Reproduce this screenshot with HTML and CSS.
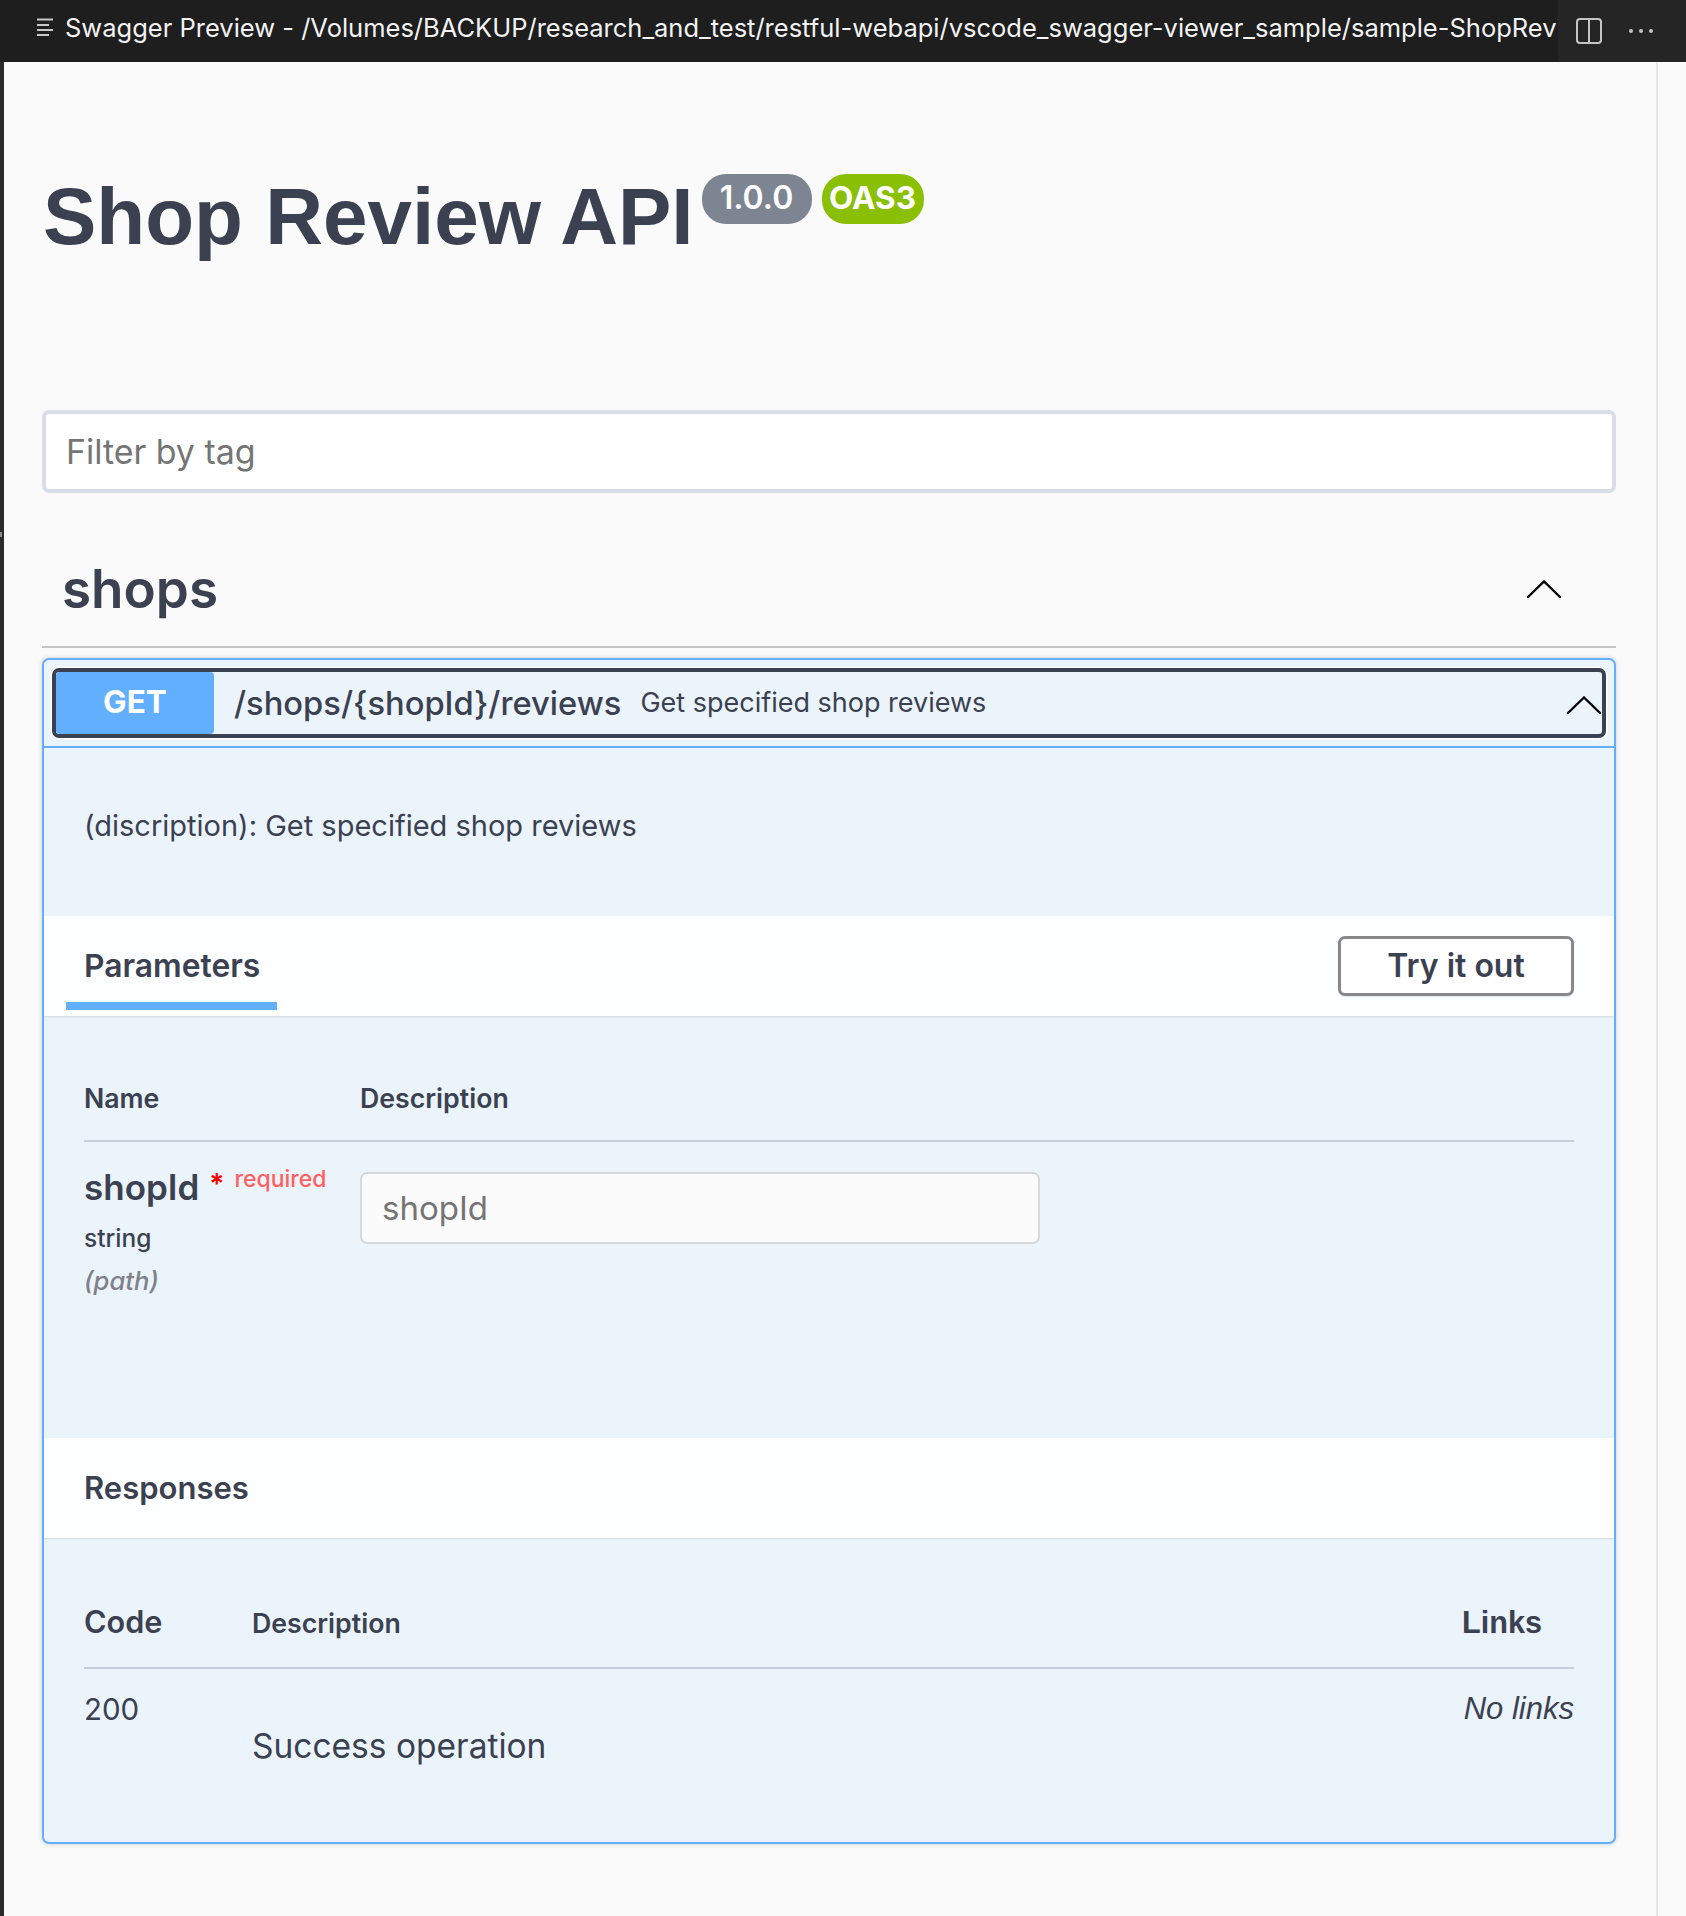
FILE: index.html
```html
<!DOCTYPE html>
<html lang="en">
<head>
<meta charset="utf-8">
<title>Swagger Preview</title>
<link rel="stylesheet" href="styles.css">
</head>
<body>
<header class="titlebar">
  <div class="tab">
    <svg class="tab-icon" width="16" height="18" viewBox="0 0 16 18"><path d="M0 1.500h16M0 7h12M0 12h16M0 17h12" stroke="#c8c8c8" stroke-width="2" fill="none"/></svg>
    <span class="tab-label">Swagger Preview - /Volumes/BACKUP/research_and_test/restful-webapi/vscode_swagger-viewer_sample/sample-ShopReview.yaml</span>
  </div>
  <div class="actions">
    <svg width="26" height="26" viewBox="0 0 26 26"><rect x="1" y="1" width="24" height="24" rx="3" fill="none" stroke="#c5c5c5" stroke-width="2"/><path d="M13 1v24" stroke="#c5c5c5" stroke-width="2"/></svg>
    <svg width="24" height="4" viewBox="0 0 24 4"><circle cx="2" cy="2" r="2" fill="#c5c5c5"/><circle cx="12" cy="2" r="2" fill="#c5c5c5"/><circle cx="22" cy="2" r="2" fill="#c5c5c5"/></svg>
  </div>
</header>
<div class="workbench">
  <div class="edge"></div>
  <main class="swagger">
    <div class="info">
      <h1 class="title">Shop Review API</h1>
      <span class="badge badge-version">1.0.0</span>
      <span class="badge badge-oas">OAS3</span>
    </div>
    <div class="filter"><span class="filter-placeholder">Filter by tag</span></div>
    <div class="tag">
      <h2 class="tag-name">shops</h2>
      <svg class="chevron" width="34" height="18" viewBox="0 0 34 18"><path d="M1 17 17 1.500 33 17" fill="none" stroke="#000" stroke-width="2.400" stroke-linecap="round"/></svg>
    </div>
    <section class="opblock">
      <div class="summary">
        <div class="summary-focus">
          <span class="method">GET</span>
          <span class="path">/shops/{shopId}/reviews</span>
          <span class="summary-text">Get specified shop reviews</span>
          <svg class="chevron-inner" width="34" height="18" viewBox="0 0 34 18"><path d="M1 17 17 1.500 33 17" fill="none" stroke="#000" stroke-width="2.400" stroke-linecap="round"/></svg>
        </div>
      </div>
      <div class="description"><p>(discription): Get specified shop reviews</p></div>
      <div class="section-head">
        <div class="tab-title"><span>Parameters</span></div>
        <button class="try-out">Try it out</button>
      </div>
      <div class="params">
        <div class="param-cols param-head">
          <span>Name</span>
          <span>Description</span>
        </div>
        <div class="param-cols param-row">
          <div>
            <div class="param-name">shopId<span class="star">*</span><span class="required">required</span></div>
            <div class="param-type">string</div>
            <div class="param-in">(path)</div>
          </div>
          <div class="param-input"><span>shopId</span></div>
        </div>
      </div>
      <div class="section-head section-head-plain"><span class="section-title">Responses</span></div>
      <div class="responses">
        <div class="resp-cols resp-head">
          <span class="resp-code-h">Code</span>
          <span class="resp-desc-h">Description</span>
          <span class="resp-links-h">Links</span>
        </div>
        <div class="resp-cols resp-row">
          <span class="resp-code">200</span>
          <span class="resp-desc">Success operation</span>
          <span class="resp-links">No links</span>
        </div>
      </div>
    </section>
  </main>
  <div class="scroll-gutter"></div>
</div>
</body>
</html>
```
FILE: styles.css
```css
* { box-sizing: border-box; }
html, body { margin: 0; padding: 0; }
body {
  width: 1686px;
  height: 1916px;
  overflow: hidden;
  background: #fafafa;
  color: #3b4151;
  font-family: Inter, "Liberation Sans", sans-serif;
}
.titlebar {
  height: 62px;
  display: flex;
  background: #1e1e1e;
}
.tab {
  flex: 1;
  min-width: 0;
  display: flex;
  align-items: center;
  padding: 0 0 8px 37px;
  overflow: hidden;
}
.tab-icon { flex: none; margin-right: 12px; }
.tab-label {
  color: #f2f2f2;
  font-size: 25.500px;
  white-space: nowrap;
}
.actions {
  flex: none;
  width: 128px;
  display: flex;
  align-items: center;
  gap: 27px;
  padding-left: 18px;
  background: #252526;
}
.workbench {
  display: flex;
  height: 1854px;
}
.edge {
  flex: none;
  width: 4px;
  background: #2b2b2b;
}
.edge::after {
  content: "";
  display: block;
  width: 2px;
  height: 5px;
  margin-top: 470px;
  background: #8a8a8a;
}
.swagger {
  flex: 1;
  min-width: 0;
  padding: 0 40px 0 38px;
}
.scroll-gutter {
  flex: none;
  width: 30px;
  border-left: 2px solid #e6e6e6;
}
.info {
  display: flex;
  align-items: flex-start;
  height: 348px;
  padding-top: 107px;
}
.title {
  margin: 0 8px 0 1px;
  font-family: "Liberation Sans", sans-serif;
  font-size: 80px;
  line-height: 96px;
  font-weight: 700;
  color: #3b4151;
}
.badge {
  height: 50px;
  margin-top: 5px;
  border-radius: 24px;
  color: #fff;
  font-size: 32px;
  font-weight: 600;
  line-height: 47px;
  text-align: center;
}
.badge-version { width: 110px; margin-right: 10px; background: #7d8492; }
.badge-oas { width: 102px; background: #89bf04; font-size: 31.500px; font-weight: 700; }
.filter {
  height: 83px;
  border: 4px solid #d8dde7;
  border-radius: 7px;
  background: #fff;
  padding-left: 20px;
  display: flex;
  align-items: center;
}
.filter-placeholder { font-size: 33.900px; color: #757575; }
.tag {
  height: 155px;
  display: flex;
  align-items: center;
  justify-content: space-between;
  padding: 39px 55px 0 20px;
  border-bottom: 2px solid #c3c3c6;
}
.tag-name {
  margin: 0;
  font-size: 53px;
  font-weight: 600;
}
.opblock {
  margin-top: 10px;
  height: 1186px;
  border: 2px solid #61affe;
  border-radius: 7px;
  background: #ebf3fb;
  box-shadow: 0 0 5px rgba(0, 0, 0, .18);
  overflow: hidden;
}
.summary {
  height: 88px;
  padding: 8px;
  border-bottom: 2px solid #61affe;
}
.summary-focus {
  position: relative;
  height: 70px;
  display: flex;
  align-items: center;
  border: 4px solid #3b4151;
  border-radius: 7px;
  box-shadow: 0 0 0 1.500px #fff;
}
.method {
  flex: none;
  width: 158px;
  height: 62px;
  border-radius: 4px;
  background: #61affe;
  color: #fff;
  font-size: 31.500px;
  font-weight: 700;
  line-height: 60px;
  text-align: center;
}
.path {
  margin-left: 20px;
  font-size: 32.700px;
  font-weight: 500;
}
.summary-text {
  margin-left: 19px;
  padding-bottom: 2px;
  font-size: 27px;
}
.chevron-inner {
  position: absolute;
  right: 1px;
  top: 24px;
}
.description {
  height: 168px;
  padding: 0 40px 13px;
  display: flex;
  align-items: center;
}
.description p {
  margin: 0;
  font-size: 29px;
}
.section-head {
  height: 100px;
  display: flex;
  align-items: flex-start;
  justify-content: space-between;
  background: #fdfeff;
  box-shadow: 0 1px 2px rgba(0, 0, 0, .1);
  position: relative;
}
.section-head-plain {
  align-items: center;
  padding: 0 0 2px 40px;
}
.tab-title {
  margin-left: 22px;
  width: 211px;
  height: 94px;
  padding: 12px 0 0 18px;
  border-bottom: 8px solid #61affe;
  font-size: 31.800px;
  font-weight: 600;
  display: flex;
  align-items: center;
}
.section-title { font-size: 31px; font-weight: 600; }
.try-out {
  margin: 20px 40px 0 0;
  width: 236px;
  height: 60px;
  border: 3.500px solid #888;
  border-radius: 7px;
  background: #fff;
  color: #3b4151;
  font-family: inherit;
  font-size: 32px;
  font-weight: 600;
  padding: 0 0 2px;
  box-shadow: 0 1px 2px rgba(0, 0, 0, .1);
}
.params {
  height: 422px;
  padding: 0 40px;
}
.param-cols {
  display: grid;
  grid-template-columns: 276px 1fr;
}
.param-head {
  height: 126px;
  padding-top: 66px;
  font-size: 26.700px;
  font-weight: 600;
  border-bottom: 2px solid #c8cfdb;
}
.param-row { padding-top: 14px; }
.param-name {
  font-size: 35px;
  font-weight: 600;
  line-height: 46px;
  white-space: nowrap;
}
.star {
  color: #f00;
  font-size: 28px;
  margin-left: 10px;
  vertical-align: 6px;
}
.required {
  color: #ff6060;
  font-size: 23px;
  font-weight: 500;
  margin-left: 10px;
  vertical-align: 13px;
}
.param-type {
  margin-top: 10px;
  font-size: 24.500px;
  line-height: 36px;
  font-weight: 500;
}
.param-in {
  margin-top: 7px;
  font-size: 25.600px;
  line-height: 36px;
  font-style: italic;
  font-weight: 500;
  color: #7f8289;
}
.param-input {
  width: 680px;
  height: 72px;
  margin-top: 16px;
  border: 2.500px solid #d9d9d9;
  border-radius: 7px;
  background: #fbfbfb;
  color: #757575;
  font-size: 33px;
  padding-left: 20px;
  display: flex;
  align-items: center;
}
.responses { padding: 0 40px; }
.resp-cols {
  display: grid;
  grid-template-columns: 168px 1fr 112px;
}
.resp-head {
  height: 131px;
  padding-top: 65px;
  border-bottom: 2px solid #c8cfdb;
  font-weight: 600;
}
.resp-code-h { font-size: 30.600px; }
.resp-desc-h { font-size: 26.700px; padding-top: 4px; }
.resp-links-h {
  font-family: "Liberation Sans", sans-serif;
  font-weight: 700;
  font-size: 30.600px;
  padding-top: 2px;
}
.resp-row { padding-top: 22px; }
.resp-code { font-size: 29.500px; }
.resp-desc { font-size: 33.500px; padding-top: 35px; }
.resp-links {
  font-family: "Liberation Sans", sans-serif;
  font-style: italic;
  font-size: 31px;
  text-align: right;
  white-space: nowrap;
}
```
